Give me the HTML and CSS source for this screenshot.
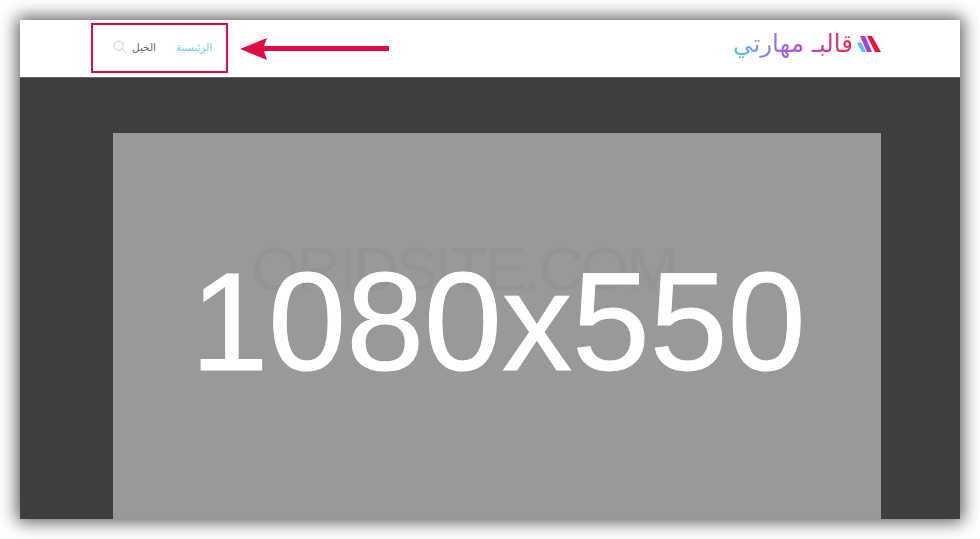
FILE: index.html
```html
<!DOCTYPE html>
<html lang="ar" dir="rtl">
<head>
    <meta charset="UTF-8">
    <meta name="viewport" content="width=device-width, initial-scale=1.0">
    <title>قالب مهارتي</title>
    <link rel="stylesheet" href="styles.css">
</head>
<body>
    <div class="window">
        <div class="header">
            <a class="logo" href="#">
                <svg class="logo-mark" width="24" height="18" viewBox="0 0 24 18">
                    <polygon points="0,8 4,7 9,17 5,17" fill="#4fc3f7"/>
                    <polygon points="3,1 8,1 15,17 10,17" fill="#a63fe0"/>
                    <polygon points="10,1 15,1 24,17 18,17" fill="#f0143c"/>
                </svg>
                <span class="logo-text">قالبـ مهارتي</span>
            </a>
            <div class="nav">
                <a class="nav-link active" href="#">الرئيسية</a>
                <a class="nav-link" href="#">الخيل</a>
                <svg class="search-icon" width="14" height="14" viewBox="0 0 14 14">
                    <circle cx="5.7" cy="5.7" r="4.6" fill="none" stroke="#c9ced3" stroke-width="1"/>
                    <line x1="9" y1="9" x2="13" y2="13" stroke="#c9ced3" stroke-width="1"/>
                </svg>
            </div>
        </div>
        <div class="hero">
            <div class="placeholder" dir="ltr">
                <span class="watermark">ORIDSITE.COM</span>
                <span class="size-label">1080x550</span>
            </div>
        </div>
    </div>

    <!-- annotation drawn over the screenshot -->
    <div class="highlight-box"></div>
    <svg class="arrow" width="150" height="24" viewBox="0 0 150 24">
        <polygon points="0,12 27,1 24,9 149,9 149,14 24,14 27,23" fill="#e30b45"/>
    </svg>
</body>
</html>
```

FILE: styles.css
```css
html, body {
    height: 100%;
}
body {
    margin: 0;
    padding: 20px;
    box-sizing: border-box;
    background-color: white;
    overflow: hidden;
    font-family: "DejaVu Sans", "Noto Sans", sans-serif;
}
a {
    text-decoration: none;
}
.window {
    height: 499px;
    display: flex;
    flex-direction: column;
    background-color: #3e3e3e;
    box-shadow: 0 0 16px 3px rgba(0,0,0,0.65);
    overflow: hidden;
}
.header {
    height: 57px;
    flex-shrink: 0;
    display: flex;
    justify-content: space-between;
    align-items: center;
    padding: 0 79px 0 93px;
    background-color: white;
    border-bottom: 1px solid #666;
}
.logo {
    display: flex;
    align-items: center;
    gap: 4px;
    margin-bottom: 9px;
}
.logo-text {
    font-size: 24.5px;
    line-height: 32px;
    background: linear-gradient(to left, #f0264f 0%, #b04fe0 50%, #4fc3f7 100%);
    -webkit-background-clip: text;
    background-clip: text;
    color: transparent;
}
.nav {
    display: flex;
    align-items: center;
    font-size: 10.5px;
    margin-top: -4px;
}
.nav-link {
    color: #666;
    margin-left: 5px;
}
.nav-link.active {
    color: #6ed0fa;
    margin-left: 20px;
}
.hero {
    flex: 1;
    padding: 55px 79px 0 93px;
}
.placeholder {
    position: relative;
    height: 100%;
    background-color: #999;
    overflow: hidden;
    font-family: "Liberation Sans", Arial, sans-serif;
}
.size-label {
    position: relative;
    display: block;
    padding: 119px 0 0 2px;
    text-align: center;
    font-size: 140px;
    line-height: 1;
    color: white;
    -webkit-text-stroke: 1px white;
}
.watermark {
    position: absolute;
    top: 105px;
    left: 138px;
    font-size: 62px;
    letter-spacing: -2.5px;
    line-height: 1;
    color: #949494;
}
.highlight-box {
    position: absolute;
    left: 91px;
    top: 23px;
    width: 133px;
    height: 46px;
    border: 2px solid #e30b45;
}
.arrow {
    position: absolute;
    left: 240px;
    top: 37px;
}
```
